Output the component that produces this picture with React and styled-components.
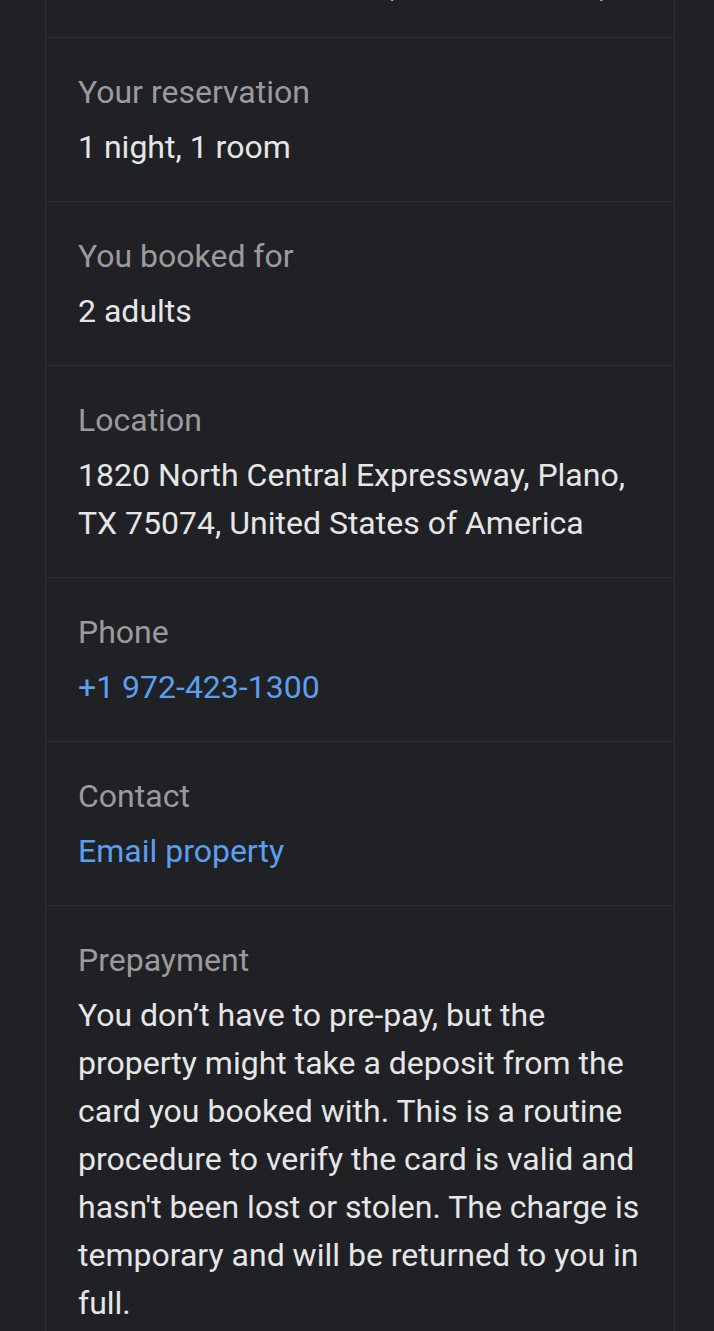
import React from "react";
import styled, { createGlobalStyle } from "styled-components";

const Global = createGlobalStyle`
  html, body {
    margin: 0;
    padding: 0;
    background: #202124;
  }
  body {
    font-family: Roboto, "Noto Sans", "Liberation Sans", sans-serif;
    -webkit-font-smoothing: antialiased;
  }
`;

const Page = styled.div`
  background: #202124;
  min-height: 100vh;
  overflow: hidden;
`;

const Card = styled.section`
  margin: -126px 0 0 45px;
  width: 630px;
  box-sizing: border-box;
  border-left: 1px solid #2d2e32;
  border-right: 1px solid #2d2e32;
  background: #202124;
`;

const Row = styled.div`
  padding: 30px 32px;
  border-bottom: 1px solid #2e2f33;
  display: flex;
  flex-direction: column;
  gap: 7px;
`;

const Label = styled.div`
  font-size: 32px;
  line-height: 48px;
  color: #9b9b9c;
`;

const Value = styled.div`
  font-size: 32px;
  line-height: 48px;
  color: #e6e6e7;
`;

const Link = styled.a`
  font-size: 32px;
  line-height: 48px;
  color: #5c9ff0;
  text-decoration: none;
  align-self: flex-start;
`;

const rows = [
  { label: "Check-out", value: "Tue 17 October 2023 (until 11:00 AM)" },
  { label: "Your reservation", value: "1 night, 1 room" },
  { label: "You booked for", value: "2 adults" },
  {
    label: "Location",
    value: "1820 North Central Expressway, Plano, TX 75074, United States of America",
  },
  { label: "Phone", link: "+1 972-423-1300", href: "tel:+19724231300" },
  { label: "Contact", link: "Email property", href: "#" },
  {
    label: "Prepayment",
    value:
      "You don\u2019t have to pre-pay, but the property might take a deposit from the card you booked with. This is a routine procedure to verify the card is valid and hasn't been lost or stolen. The charge is temporary and will be returned to you in full.",
  },
];

export default function App() {
  return (
    <Page>
      <Global />
      <Card>
        {rows.map((r) => (
          <Row key={r.label}>
            <Label>{r.label}</Label>
            {r.link ? (
              <Link href={r.href}>{r.link}</Link>
            ) : (
              <Value>{r.value}</Value>
            )}
          </Row>
        ))}
      </Card>
    </Page>
  );
}
